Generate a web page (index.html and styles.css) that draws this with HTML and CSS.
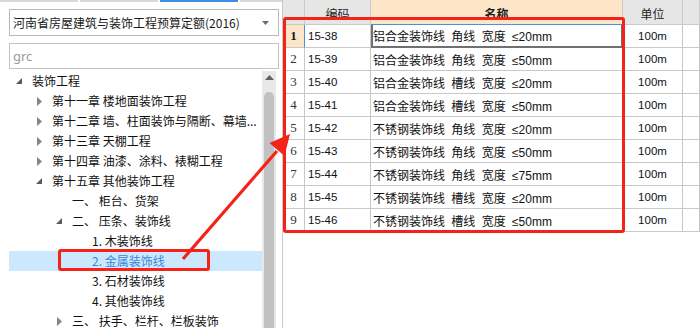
FILE: index.html
```html
<!DOCTYPE html>
<html lang="zh-CN">
<head>
<meta charset="utf-8">
<title>定额库</title>
<link rel="stylesheet" href="styles.css">
</head>
<body>
<div class="app">
  <aside class="left">
    <div class="tabs">
      <span class="tab t1"></span><span class="tab t2"></span><span class="tab t3 active"></span><span class="tab t4"></span>
    </div>
    <div class="combo">
      <span class="combo-text">河南省房屋建筑与装饰工程预算定额(2016)</span>
      <svg class="caret" width="7" height="4" viewBox="0 0 7 4"><polygon points="0,0 7,0 3.5,4" fill="#6b6b6b"/></svg>
    </div>
    <div class="search">grc</div>
    <div class="tree-wrap">
      <ul class="tree">
        <li class="node l0"><span class="twisty"><svg width="6" height="6" viewBox="0 0 6 6"><polygon points="6,0 6,6 0,6" fill="#5c5c5c"/></svg></span><span class="label">装饰工程</span></li>
        <li class="node l1"><span class="twisty"><svg width="5" height="9" viewBox="0 0 5 9"><polygon points="0,0 5,4.5 0,9" fill="#858585"/></svg></span><span class="label">第十一章 楼地面装饰工程</span></li>
        <li class="node l1"><span class="twisty"><svg width="5" height="9" viewBox="0 0 5 9"><polygon points="0,0 5,4.5 0,9" fill="#858585"/></svg></span><span class="label">第十二章 墙、柱面装饰与隔断、幕墙...</span></li>
        <li class="node l1"><span class="twisty"><svg width="5" height="9" viewBox="0 0 5 9"><polygon points="0,0 5,4.5 0,9" fill="#858585"/></svg></span><span class="label">第十三章 天棚工程</span></li>
        <li class="node l1"><span class="twisty"><svg width="5" height="9" viewBox="0 0 5 9"><polygon points="0,0 5,4.5 0,9" fill="#858585"/></svg></span><span class="label">第十四章 油漆、涂料、裱糊工程</span></li>
        <li class="node l1"><span class="twisty"><svg width="6" height="6" viewBox="0 0 6 6"><polygon points="6,0 6,6 0,6" fill="#5c5c5c"/></svg></span><span class="label">第十五章 其他装饰工程</span></li>
        <li class="node l2"><span class="twisty"></span><span class="label">一、 柜台、货架</span></li>
        <li class="node l2"><span class="twisty"><svg width="6" height="6" viewBox="0 0 6 6"><polygon points="6,0 6,6 0,6" fill="#5c5c5c"/></svg></span><span class="label">二、 压条、装饰线</span></li>
        <li class="node l3"><span class="twisty"></span><span class="label">1. 木装饰线</span></li>
        <li class="node l3 selected"><span class="twisty"></span><span class="label">2. 金属装饰线</span></li>
        <li class="node l3"><span class="twisty"></span><span class="label">3. 石材装饰线</span></li>
        <li class="node l3"><span class="twisty"></span><span class="label">4. 其他装饰线</span></li>
        <li class="node l2"><span class="twisty"><svg width="5" height="9" viewBox="0 0 5 9"><polygon points="0,0 5,4.5 0,9" fill="#858585"/></svg></span><span class="label">三、 扶手、栏杆、栏板装饰</span></li>
      </ul>
      <div class="scrollbar">
        <svg class="up" width="9" height="5" viewBox="0 0 9 5"><polygon points="0,5 9,5 4.5,0" fill="#606060"/></svg>
        <div class="thumb"></div>
      </div>
    </div>
  </aside>

  <main class="grid-panel">
    <div class="grid">
      <div class="hd rn"></div>
      <div class="hd">编码</div>
      <div class="hd hd-name">名称</div>
      <div class="hd">单位</div>
      <div class="hd"></div>

      <div class="c rn rn-cur">1</div><div class="c code code-cur">15-38</div><div class="c name name-cur">铝合金装饰线 角线 宽度 ≤20mm</div><div class="c unit">100m</div><div class="c"></div>
      <div class="c rn">2</div><div class="c code">15-39</div><div class="c name">铝合金装饰线 角线 宽度 ≤50mm</div><div class="c unit">100m</div><div class="c"></div>
      <div class="c rn">3</div><div class="c code">15-40</div><div class="c name">铝合金装饰线 槽线 宽度 ≤20mm</div><div class="c unit">100m</div><div class="c"></div>
      <div class="c rn">4</div><div class="c code">15-41</div><div class="c name">铝合金装饰线 槽线 宽度 ≤50mm</div><div class="c unit">100m</div><div class="c"></div>
      <div class="c rn">5</div><div class="c code">15-42</div><div class="c name">不锈钢装饰线 角线 宽度 ≤20mm</div><div class="c unit">100m</div><div class="c"></div>
      <div class="c rn">6</div><div class="c code">15-43</div><div class="c name">不锈钢装饰线 角线 宽度 ≤50mm</div><div class="c unit">100m</div><div class="c"></div>
      <div class="c rn">7</div><div class="c code">15-44</div><div class="c name">不锈钢装饰线 角线 宽度 ≤75mm</div><div class="c unit">100m</div><div class="c"></div>
      <div class="c rn">8</div><div class="c code">15-45</div><div class="c name">不锈钢装饰线 槽线 宽度 ≤20mm</div><div class="c unit">100m</div><div class="c"></div>
      <div class="c rn">9</div><div class="c code">15-46</div><div class="c name">不锈钢装饰线 槽线 宽度 ≤50mm</div><div class="c unit">100m</div><div class="c"></div>
    </div>
  </main>

  <div class="mark mark-tree"></div>
  <div class="mark mark-grid"></div>
  <svg class="arrow" width="700" height="328" viewBox="0 0 700 328">
    <line x1="183" y1="259" x2="277" y2="151" stroke="#f5221a" stroke-width="3.2"/>
    <polygon points="290,134 284.5,156 269.5,143" fill="#f5221a"/>
  </svg>
</div>
</body>
</html>
```

FILE: styles.css
```css
* { box-sizing: border-box; margin: 0; padding: 0; }

html, body {
  width: 700px;
  height: 328px;
  overflow: hidden;
  background: #ffffff;
}

body {
  font-family: "Noto Sans CJK SC", "Noto Sans", sans-serif;
  font-size: 12px;
  color: #1e1e1e;
}

.app {
  position: relative;
  width: 700px;
  height: 328px;
  display: flex;
  overflow: hidden;
}

/* ---------- left panel ---------- */
.left {
  width: 282px;
  flex: none;
  display: flex;
  flex-direction: column;
  background: #fff;
}

.tabs {
  height: 2px;
  display: flex;
  gap: 2px;
}
.tab { height: 2px; background: #d8d8d8; }
.t1 { width: 78px; }
.t2 { width: 78px; }
.t3 { width: 78px; }
.t4 { flex: 1; }
.tab.active { background: #3d8fe4; }

.combo {
  margin: 7px 3px 0 9px;
  height: 27px;
  border: 1px solid #b9b9b9;
  display: flex;
  align-items: center;
  justify-content: space-between;
  padding: 0 9px 0 3px;
  background: #fff;
}
.combo-text { white-space: nowrap; line-height: 16px; color: #1a1a1a; }
.caret { flex: none; }

.search {
  margin: 7px 3px 0 9px;
  height: 26px;
  border: 1px solid #c4c4c4;
  padding-left: 3px;
  display: flex;
  align-items: center;
  color: #9a9a9a;
  font-family: "Noto Sans", sans-serif;
  font-size: 13px;
}

.tree-wrap {
  margin-top: 2px;
  margin-left: 9px;
  flex: 1;
  display: flex;
  min-height: 0;
}

.tree {
  list-style: none;
  width: 253px;
  flex: none;
  overflow: hidden;
}

.node {
  height: 20px;
  display: flex;
  align-items: center;
  white-space: nowrap;
  color: #111;
}
.l0 { padding-left: 4px; }
.l1 { padding-left: 24px; }
.l2 { padding-left: 44px; }
.l3 { padding-left: 64px; }

.twisty {
  width: 12px;
  height: 20px;
  flex: none;
  display: flex;
  align-items: center;
  justify-content: center;
  margin-right: 7px;
}
.label { line-height: 20px; }

.node.selected {
  background: #cce8ff;
  color: #3b86d6;
}

.scrollbar {
  width: 14px;
  flex: none;
  background: #e8e8e8;
  display: flex;
  flex-direction: column;
  align-items: center;
}
.scrollbar .up { margin-top: 4px; flex: none; }
.thumb {
  margin-top: 12px;
  width: 10px;
  flex: 1;
  background: #c1c1c1;
  border-radius: 5px 5px 0 0;
}

/* ---------- grid ---------- */
.grid-panel {
  flex: 1;
  border-left: 1px solid #c9c9c9;
  min-width: 0;
}

.grid {
  display: grid;
  grid-template-columns: 22px 66px 252px 60px 1fr;
  grid-template-rows: 25px repeat(9, 23px);
}

.hd {
  background: #e6e6e6;
  border-right: 1px solid #cacaca;
  border-bottom: 1px solid #cacaca;
  display: flex;
  align-items: center;
  justify-content: center;
  color: #1e1e1e;
  padding-top: 2px;
}
.hd-name {
  background: #fde6c8;
  font-weight: bold;
  border-bottom-color: #4a91e2;
}

.c {
  border-right: 1px solid #c8c8c8;
  border-bottom: 1px solid #c8c8c8;
  display: flex;
  align-items: center;
  white-space: nowrap;
  background: #fff;
}

.rn {
  justify-content: center;
  font-family: "Liberation Serif", serif;
  font-size: 13px;
  color: #333;
}
.rn-cur {
  background: #fde6c8;
  font-weight: bold;
  color: #1a1a1a;
  border-right-color: #4a91e2;
}

.code {
  padding-left: 3px;
  font-family: "Liberation Sans", sans-serif;
  font-size: 11.5px;
  color: #111;
}

.name {
  padding-left: 2px;
  font-family: "Liberation Sans", "Noto Sans CJK SC", sans-serif;
  font-size: 12px;
  word-spacing: 3px;
  color: #111;
}
.name-cur {
  border-left: 2px solid #707070;
  border-right: 2px solid #707070;
  border-bottom: 2px solid #707070;
  padding-left: 0;
}

.unit {
  justify-content: center;
  font-family: "Liberation Sans", sans-serif;
  font-size: 11.5px;
  color: #111;
}

/* ---------- annotations ---------- */
.mark {
  position: absolute;
  border: 3px solid #f5221a;
  border-radius: 3px;
  pointer-events: none;
}
.mark-tree { left: 58px; top: 249px; width: 152px; height: 22px; }
.mark-grid { left: 283px; top: 17px; width: 342px; height: 216px; }

.arrow {
  position: absolute;
  left: 0;
  top: 0;
  pointer-events: none;
}
```
